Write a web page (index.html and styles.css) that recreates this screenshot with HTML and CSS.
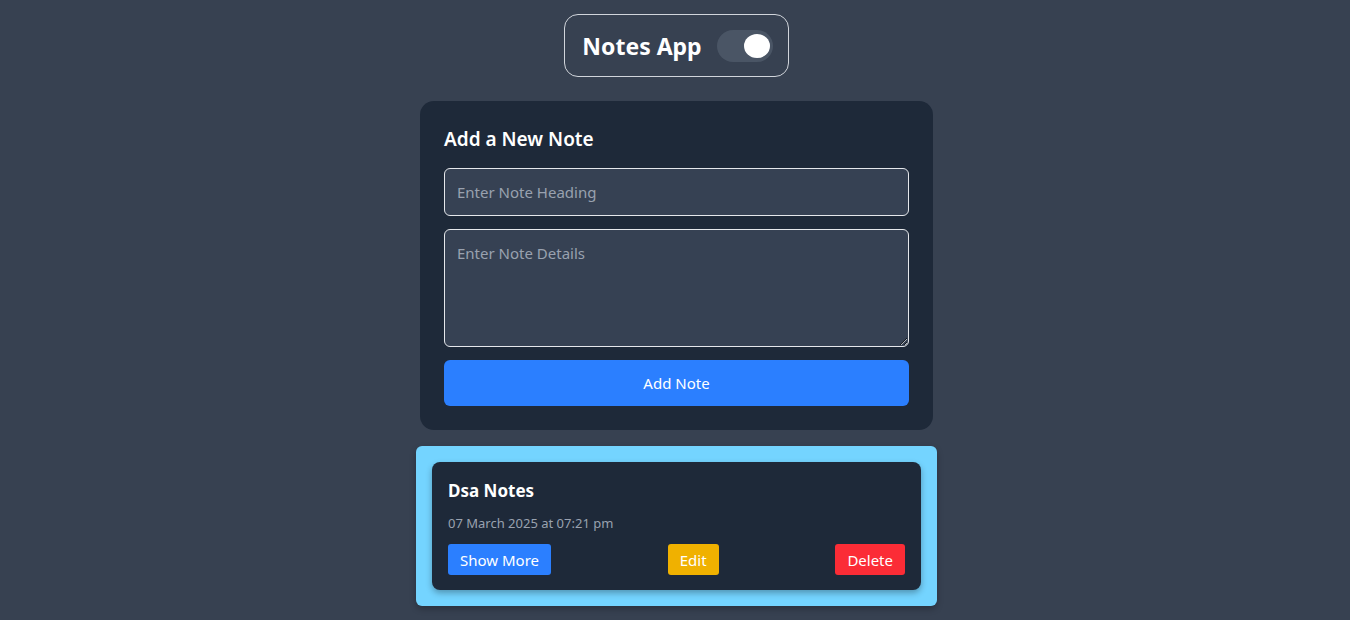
FILE: index.html
```html
<!DOCTYPE html>
<html lang="en">
<head>
<meta charset="utf-8">
<title>Notes App</title>
<link rel="stylesheet" href="styles.css">
</head>
<body>
<main class="page">
  <header class="app-header">
    <h1 class="app-title">Notes App</h1>
    <button class="toggle" aria-label="Toggle theme"><span class="knob"></span></button>
  </header>

  <section class="form-card">
    <h2 class="form-title">Add a New Note</h2>
    <input class="field" type="text" placeholder="Enter Note Heading">
    <textarea class="field area" placeholder="Enter Note Details"></textarea>
    <button class="add-btn">Add Note</button>
  </section>

  <section class="note-wrap">
    <article class="note">
      <h3 class="note-title">Dsa Notes</h3>
      <p class="note-date">07 March 2025 at 07:21 pm</p>
      <div class="note-actions">
        <button class="btn btn-blue">Show More</button>
        <button class="btn btn-yellow">Edit</button>
        <button class="btn btn-red">Delete</button>
      </div>
    </article>
  </section>
</main>
</body>
</html>
```

FILE: styles.css
```css
* { box-sizing: border-box; }
html, body { margin: 0; padding: 0; }
body {
  background: #374151;
  font-family: "Segoe UI", "Noto Sans", "Open Sans", sans-serif;
  color: #fff;
  height: 620px;
  overflow: hidden;
}
.page {
  display: flex;
  flex-direction: column;
  align-items: center;
  padding: 14px 0 0 3px;
}
.app-header {
  display: flex;
  align-items: center;
  gap: 15px;
  border: 1px solid #d1d5db;
  border-radius: 14px;
  padding: 15px 15px 14px 17px;
}
.app-title {
  margin: 0;
  font-size: 23px;
  line-height: 31px;
  font-weight: 700;
}
.toggle {
  width: 56px;
  height: 32px;
  border: none;
  border-radius: 16px;
  background: #4a5565;
  padding: 0 3px 0 0;
  display: flex;
  align-items: center;
  justify-content: flex-end;
}
.knob {
  width: 26px;
  height: 24px;
  border-radius: 50%;
  background: #fff;
}
.form-card {
  width: 513px;
  margin-top: 24px;
  background: #1e2939;
  border-radius: 14px;
  padding: 24px;
  display: flex;
  flex-direction: column;
}
.form-title {
  margin: 0 0 15px;
  font-size: 19px;
  line-height: 28px;
  font-weight: 600;
}
.field {
  width: 100%;
  height: 48px;
  background: #364153;
  border: 1px solid #e5e7eb;
  border-radius: 6px;
  color: #fff;
  font-family: inherit;
  font-size: 15px;
  padding: 0 12px;
  margin-bottom: 13px;
  outline: none;
}
.field::placeholder { color: #99a1af; }
.area {
  height: 118px;
  padding: 13px 12px;
  resize: vertical;
}
.add-btn {
  height: 46px;
  border: none;
  border-radius: 6px;
  background: #2b7fff;
  color: #fff;
  font-family: inherit;
  font-size: 15px;
}
.note-wrap {
  width: 521px;
  margin-top: 16px;
  background: #74d4ff;
  border-radius: 6px;
  padding: 16px;
  box-shadow: 0 3px 6px rgba(0,0,0,0.25);
}
.note {
  background: #1e2939;
  border-radius: 8px;
  padding: 17px 16px 15px;
  box-shadow: 0 3px 6px rgba(0,0,0,0.3);
}
.note-title {
  margin: 0;
  font-size: 17px;
  line-height: 24px;
  font-weight: 700;
}
.note-date {
  margin: 10px 0 11px;
  font-size: 13px;
  line-height: 20px;
  color: #99a1af;
}
.note-actions {
  display: flex;
  justify-content: space-between;
}
.btn {
  height: 31px;
  border: none;
  border-radius: 3px;
  color: #fff;
  font-family: inherit;
  font-size: 15px;
  padding: 0 12px;
}
.btn-blue { background: #2b7fff; }
.btn-yellow { background: #f0b100; }
.btn-red { background: #fb2c36; }
```
